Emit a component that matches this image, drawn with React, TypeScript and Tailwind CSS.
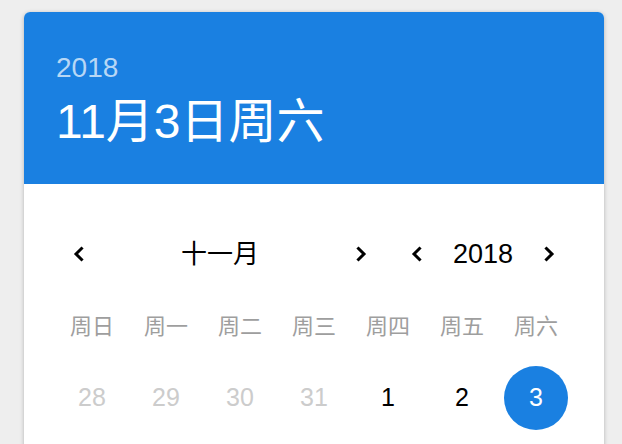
import React from "react";

const font = { fontFamily: '"Liberation Sans", "Noto Sans CJK SC", sans-serif' };

function Chevron({ dir }: { dir: "left" | "right" }) {
    return (
        <svg width="24" height="24" viewBox="0 0 24 24" className="text-black">
            {dir === "left" ? (
                <path d="M14.5 6.5 L9 12 L14.5 17.5" fill="none" stroke="currentColor" strokeWidth="3" strokeLinecap="square" />
            ) : (
                <path d="M9.5 6.5 L15 12 L9.5 17.5" fill="none" stroke="currentColor" strokeWidth="3" strokeLinecap="square" />
            )}
        </svg>
    );
}

function NavButton({ dir }: { dir: "left" | "right" }) {
    return (
        <button className="flex h-12 w-12 items-center justify-center rounded-full">
            <Chevron dir={dir} />
        </button>
    );
}

const weekdays = ["周日", "周一", "周二", "周三", "周四", "周五", "周六"];
const days = [
    { n: "28", muted: true },
    { n: "29", muted: true },
    { n: "30", muted: true },
    { n: "31", muted: true },
    { n: "1" },
    { n: "2" },
    { n: "3", selected: true },
];

export default function App() {
    return (
        <div className="min-h-screen bg-[#eeeeee] pl-6 pt-3" style={font}>
            <div className="w-[580px] overflow-hidden rounded-md bg-white shadow-[0_1px_4px_rgba(0,0,0,0.25)]">
                {/* header */}
                <div className="flex h-[172px] flex-col bg-[#1a80e1] px-8 pt-[38px]">
                    <div className="text-[28px] leading-[36px] text-white/70">2018</div>
                    <div className="mt-[8px] text-[48px] leading-[56px] text-white">11月3日周六</div>
                </div>

                {/* body */}
                <div className="px-[31px] pb-10 pt-[46px]">
                    <div className="flex h-12 items-center gap-2">
                        <div className="flex flex-1 items-center">
                            <NavButton dir="left" />
                            <div className="flex-1 text-center text-[26px] text-black">十一月</div>
                            <NavButton dir="right" />
                        </div>
                        <div className="flex w-[180px] items-center">
                            <NavButton dir="left" />
                            <div className="flex-1 text-center text-[27px] text-black">2018</div>
                            <NavButton dir="right" />
                        </div>
                    </div>

                    <div className="mt-[24px] grid grid-cols-7">
                        {weekdays.map((w) => (
                            <div key={w} className="flex h-12 items-center justify-center text-[22px] text-[#9e9e9e]">
                                {w}
                            </div>
                        ))}
                    </div>

                    <div className="mt-4 grid grid-cols-7">
                        {days.map((d) => (
                            <div key={d.n} className="flex h-16 items-center justify-center">
                                <div
                                    className={
                                        d.selected
                                            ? "flex h-16 w-16 items-center justify-center rounded-full bg-[#1a80e1] text-[25px] text-white"
                                            : d.muted
                                              ? "text-[25px] text-[#cccccc]"
                                              : "text-[25px] text-black"
                                    }
                                >
                                    {d.n}
                                </div>
                            </div>
                        ))}
                    </div>
                </div>
            </div>
        </div>
    );
}
